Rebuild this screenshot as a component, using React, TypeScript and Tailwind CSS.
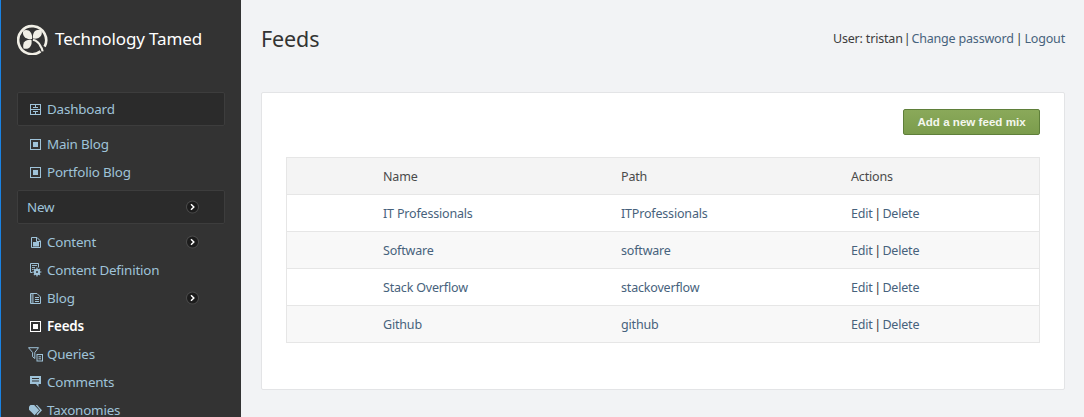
import React from "react";

const sans = "font-['Noto_Sans','Open_Sans',sans-serif]";

function ChevronDot({ className }: { className: string }) {
  return (
    <span className={`absolute top-1/2 flex h-[11px] w-[11px] -translate-y-1/2 items-center justify-center rounded-full bg-[#1c1c1c] ring-1 ring-[#4a4a4a] ${className}`}>
      <svg className="shrink-0" width="7" height="7" viewBox="0 0 7 7" fill="none" stroke="#fff" strokeWidth="1.5">
        <path d="M2 .8 4.8 3.5 2 6.2" />
      </svg>
    </span>
  );
}

function DashIcon() {
  return (
    <svg className="shrink-0" width="11" height="11" viewBox="0 0 11 11" fill="none" stroke="currentColor">
      <rect x=".5" y=".5" width="10" height="10" />
      <path d="M5.5 1v2.5M5.5 7.5V10M1 5.5h9" />
      <path d="M3 3.5h5M3 7.5h5" />
    </svg>
  );
}

function SquareIcon() {
  return (
    <svg className="shrink-0" width="11" height="11" viewBox="0 0 11 11" fill="none" stroke="currentColor">
      <rect x=".5" y=".5" width="10" height="10" />
      <rect x="3" y="3" width="5" height="5" fill="currentColor" stroke="none" />
    </svg>
  );
}

function PageIcon() {
  return (
    <svg className="shrink-0" width="10" height="11" viewBox="0 0 10 11" fill="none" stroke="currentColor">
      <path d="M.5.5h5.5l3.5 3.5v6.5h-9z" />
      <path d="M5.5 1v3.5H9" />
      <path d="M2 5h6v4.5H2z" fill="currentColor" stroke="none" />
    </svg>
  );
}

function GearPageIcon() {
  return (
    <svg className="shrink-0" width="12" height="14" viewBox="0 0 12 14" fill="none" stroke="currentColor">
      <path d="M.5.5h8v4M.5.5v9h2" />
      <path d="M2 2.5h5M2 4.5h3M2 6.5h1.5" strokeWidth=".9" />
      <circle cx="7" cy="9" r="3.2" fill="currentColor" stroke="none" />
      <path d="M7 4.6v8.8M2.6 9h8.8M3.9 5.9l6.2 6.2M10.1 5.9l-6.2 6.2" strokeWidth="1.2" />
      <circle cx="7" cy="9" r="1" fill="#333" stroke="none" />
    </svg>
  );
}

function BlogIcon() {
  return (
    <svg className="shrink-0" width="11" height="11" viewBox="0 0 11 11" fill="none" stroke="currentColor">
      <path d="M.5.5h6.5l3.5 3.5v6.5H.5z" />
      <path d="M2 1v9M3 1v9" strokeWidth=".8" />
      <path d="M5 4.5h4M5 6.5h4M5 8.5h4" />
    </svg>
  );
}

function FilterIcon() {
  return (
    <svg className="shrink-0" width="15" height="15" viewBox="0 0 15 15" fill="none" stroke="currentColor">
      <path d="M.5.7h10L6.8 5.5v6L4.6 9.7V5.5z" />
      <rect x="9" y="7.5" width="5.5" height="6.5" />
      <path d="M10.5 9.8h2.5M10.5 11.8h2.5" />
    </svg>
  );
}

function CommentIcon() {
  return (
    <svg className="shrink-0" width="11" height="12" viewBox="0 0 11 12" fill="currentColor">
      <path fillRule="evenodd" d="M0 0h11v8H8.5v3L6 8H0zM2 2v1h7V2zM2 4.5v1h7v-1z" />
    </svg>
  );
}

function TagIcon() {
  return (
    <svg className="shrink-0" width="13" height="11" viewBox="0 0 13 11" fill="currentColor">
      <path d="M0 1.5 1.5 0h3.7l5 5.2-4.6 5L0 4.8z" />
      <path d="M6.7 0h1.4l4.9 5.2-4.6 5-1-.9L11 5.2z" />
    </svg>
  );
}

function Logo() {
  return (
    <svg className="shrink-0" width="31" height="31" viewBox="0 0 31 31" fill="#f1efe6">
      <path
        d="M23.5 27.4A14 14 0 1 1 27.6 22.6"
        fill="none"
        stroke="#f1efe6"
        strokeWidth="2.6"
      />
      <path d="M15 15C8 16 4.5 11 6.5 6.5 11 4.5 16 8 15 15z" />
      <path d="M16 14.5C15 8 19 4.5 24.5 6 26 11 23 15.5 16 14.5z" />
      <path d="M14.5 16C15.5 22 12 26 6.5 24.5 5 19.5 8 15 14.5 16z" />
      <path d="M16 15.8c3 .8 6 2.6 7.6 6.6 1 1.2 1.8 3 2 5" fill="none" stroke="#f1efe6" strokeWidth="2.2" />
    </svg>
  );
}

const navTop = [
  { label: "Main Blog", icon: <SquareIcon /> },
  { label: "Portfolio Blog", icon: <SquareIcon /> },
];

const navBottom = [
  { label: "Content", icon: <PageIcon />, more: true },
  { label: "Content Definition", icon: <GearPageIcon /> },
  { label: "Blog", icon: <BlogIcon />, more: true },
  { label: "Feeds", icon: <SquareIcon />, active: true },
  { label: "Queries", icon: <FilterIcon /> },
  { label: "Comments", icon: <CommentIcon /> },
  { label: "Taxonomies", icon: <TagIcon /> },
];

function NavRow({ label, icon, more, active }: { label: string; icon: React.ReactNode; more?: boolean; active?: boolean }) {
  return (
    <div className={`relative flex h-7 items-center pl-[29px] ${active ? "font-semibold text-white" : "text-[#9fc3d9]"}`}>
      <span className="flex w-[17px] shrink-0 items-center">
        <span className="flex h-4 w-[11px] items-center justify-center">{icon}</span>
      </span>
      <span className="whitespace-nowrap">{label}</span>
      {more && <ChevronDot className="left-[186px]" />}
    </div>
  );
}

const feeds = [
  { name: "IT Professionals", path: "ITProfessionals" },
  { name: "Software", path: "software" },
  { name: "Stack Overflow", path: "stackoverflow" },
  { name: "Github", path: "github" },
];

const linkColor = "text-[#47627c]";
const gridCols = "grid grid-cols-[96px_238px_230px_1fr] pt-[2px]";

export default function App() {
  return (
    <div className={`flex h-[417px] w-[1084px] overflow-hidden bg-[#f2f3f5] text-[12.5px] tracking-[-0.18px] ${sans}`}>
      <aside className="w-[241px] shrink-0 overflow-hidden border-l border-[#1a82e2] bg-[#333333] text-[13.4px]">
        <div className="flex h-[92px] items-start pl-[16px] pt-[24px]">
          <Logo />
          <span className="ml-[7px] mt-[2px] whitespace-nowrap text-[17px] leading-[26px] tracking-[-0.13px] text-white">Technology Tamed</span>
        </div>
        <div className="ml-[16px] flex h-[34px] w-[208px] items-center rounded-[2px] border border-[#3d3d3d] bg-[#2b2b2b] pl-[12px] text-[#9fc3d9]">
          <span className="flex w-[17px]"><DashIcon /></span>
          <span>Dashboard</span>
        </div>
        <div className="mt-1">
          {navTop.map((item) => (
            <NavRow key={item.label} {...item} />
          ))}
        </div>
        <div className="relative ml-[16px] mt-1 flex h-[34px] w-[208px] items-center rounded-[2px] border border-[#3d3d3d] bg-[#2b2b2b] pl-[9px] text-[#9fc3d9]">
          <span>New</span>
          <ChevronDot className="left-[169px]" />
        </div>
        <div className="mt-1">
          {navBottom.map((item) => (
            <NavRow key={item.label} {...item} />
          ))}
        </div>
      </aside>

      <main className="min-w-0 flex-1 pl-5 pr-[19px]">
        <header className="flex h-[92px] items-start justify-between">
          <h1 className="mt-[22px] text-[21.5px] leading-[34px] tracking-[-0.1px] text-[#333]">Feeds</h1>
          <p className="mt-[29px] leading-[20px] text-[#3c3c3c]">
            User: tristan<span className="mx-px">|</span><span className={linkColor}>Change password</span><span className="mx-[2px]">|</span><span className={linkColor}>Logout</span>
          </p>
        </header>

        <section className="h-[298px] rounded-[2px] border border-[#e3e4e6] bg-white px-6 pt-4">
          <div className="flex justify-end">
            <button
              type="button"
              className="h-[26px] w-[137px] rounded-[2px] border border-[#5f7f3a] bg-gradient-to-b from-[#8aa95a] to-[#7b9c4c] font-['Liberation_Sans',sans-serif] text-[11.6px] font-bold tracking-normal text-[#f4f7ee]"
            >
              Add a new feed mix
            </button>
          </div>

          <div className="mt-[22px] border border-b-0 border-[#e6e6e6] text-[#47627c]">
            <div className={`${gridCols} h-[37px] items-center border-b border-[#e6e6e6] bg-[#f4f4f4] text-[#4a4a4a]`}>
              <span />
              <span>Name</span>
              <span>Path</span>
              <span>Actions</span>
            </div>
            {feeds.map((feed, i) => (
              <div
                key={feed.path}
                className={`${gridCols} h-[37px] items-center border-b border-[#e6e6e6] ${i % 2 === 1 ? "bg-[#f8f8f8]" : "bg-white"}`}
              >
                <span />
                <span>{feed.name}</span>
                <span>{feed.path}</span>
                <span>
                  Edit<span className="mx-[1.5px] text-[#333]">|</span>Delete
                </span>
              </div>
            ))}
          </div>
        </section>
      </main>
    </div>
  );
}
